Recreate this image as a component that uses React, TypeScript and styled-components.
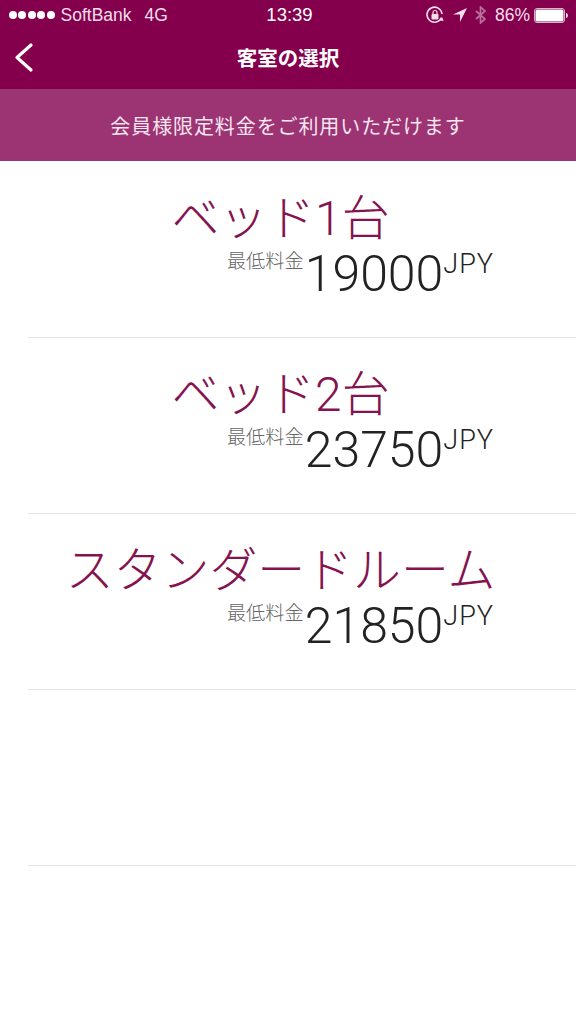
import React from 'react';
import styled, { createGlobalStyle } from 'styled-components';

const GlobalStyle = createGlobalStyle`
  html, body {
    margin: 0;
    padding: 0;
    background: #fff;
    font-family: "Liberation Sans", "Noto Sans CJK JP", sans-serif;
  }
`;

const Page = styled.div`
  width: 576px;
  height: 1024px;
  overflow: hidden;
  background: #fff;
`;

const Header = styled.div`
  background: #84004c;
  color: #fff;
  height: 89px;
`;

const StatusBar = styled.div`
  display: grid;
  grid-template-columns: 1fr auto 1fr;
  align-items: center;
  height: 30px;
  padding: 0 7px 0 9px;
  font-size: 17.5px;
  color: #f3dfe9;
`;

const StatusLeft = styled.div`
  display: flex;
  align-items: center;
`;

const Dots = styled.div`
  display: flex;
  gap: 1.4px;
  margin-right: 6px;
`;

const Dot = styled.span`
  width: 8px;
  height: 8px;
  border-radius: 50%;
  background: #fff;
`;

const Network = styled.span`
  margin-left: 13px;
`;

const Clock = styled.div`
  font-size: 18.5px;
  color: #fff;
  margin-left: 1px;
`;

const StatusRight = styled.div`
  display: flex;
  align-items: center;
  justify-content: flex-end;
`;

const Percent = styled.span`
  margin: 0 4px 0 9px;
`;

const Icon = styled.svg<{ $gap?: number }>`
  display: block;
  margin-left: ${(p) => p.$gap ?? 0}px;
`;

const NavBar = styled.div`
  position: relative;
  display: flex;
  align-items: center;
  justify-content: center;
  height: 54px;
`;

const BackButton = styled.button`
  position: absolute;
  left: 13px;
  top: 12px;
  padding: 0;
  border: none;
  background: none;
`;

const NavTitle = styled.div`
  font-size: 20.5px;
  font-weight: 700;
`;

const Banner = styled.div`
  display: flex;
  align-items: center;
  justify-content: center;
  height: 72px;
  background: #9c3373;
  color: #f7e6ef;
  font-size: 20px;
  letter-spacing: 0.9px;
`;

const RoomList = styled.div`
  padding-top: 1px;
`;

const Row = styled.div`
  box-sizing: border-box;
  height: 176px;
  margin-left: 28px;
  border-bottom: 1px solid #e4e4e4;
`;

const RoomName = styled.div`
  height: 60px;
  padding-top: 27px;
  padding-right: 43px;
  text-align: center;
  font-family: "Roboto", "Noto Sans CJK JP", sans-serif;
  font-size: 47.9px;
  line-height: 60px;
  font-weight: 300;
  color: #84134f;
  white-space: nowrap;
`;

const PriceLine = styled.div`
  display: flex;
  justify-content: flex-end;
  align-items: flex-start;
  padding-right: 82px;
  margin-top: -2px;
  color: #222;
  font-family: "Roboto", "Liberation Sans", sans-serif;
  font-weight: 300;
`;

const PriceLabel = styled.span`
  font-family: "Noto Sans CJK JP", sans-serif;
  font-weight: 300;
  font-size: 19.2px;
  line-height: 24px;
  margin-top: 1px;
  margin-right: 1px;
  color: #666;
`;

const Amount = styled.span`
  font-size: 50px;
  line-height: 52px;
  margin-top: 1px;
`;

const Currency = styled.span`
  font-size: 27px;
  line-height: 30px;
  letter-spacing: 1px;
  margin-top: 2px;
`;

const rooms = [
  { name: 'ベッド1台', price: '19000' },
  { name: 'ベッド2台', price: '23750' },
  { name: 'スタンダードルーム', price: '21850' },
];

export default function App() {
  return (
    <Page>
      <GlobalStyle />
      <Header>
        <StatusBar>
          <StatusLeft>
            <Dots>
              {[0, 1, 2, 3, 4].map((i) => (
                <Dot key={i} />
              ))}
            </Dots>
            SoftBank
            <Network>4G</Network>
          </StatusLeft>
          <Clock>13:39</Clock>
          <StatusRight>
            <Icon width="18" height="18" viewBox="0 0 18 18" fill="none">
              <path d="M15.5 11.5A7.5 7.5 0 1 1 16 8" stroke="#f3dfe9" strokeWidth="1.6" />
              <path d="M13.5 14.5l3-3 1 3.5z" fill="#f3dfe9" />
              <rect x="5.5" y="8" width="7" height="5.5" rx="1" fill="#f3dfe9" />
              <path d="M7 8V6.5a2 2 0 0 1 4 0V8" stroke="#f3dfe9" strokeWidth="1.2" />
            </Icon>
            <Icon $gap={9} width="14" height="14" viewBox="0 0 14 14">
              <path d="M14 0L0 6.5h7V14z" fill="#f3dfe9" />
            </Icon>
            <Icon $gap={8} width="11" height="18" viewBox="0 0 11 18" fill="none">
              <path d="M1 5l9 8-4.5 4V1L10 5l-9 8" stroke="#b9709c" strokeWidth="1.7" />
            </Icon>
            <Percent>86%</Percent>
            <Icon width="35" height="15" viewBox="0 0 35 15">
              <rect x="0.5" y="0.5" width="30" height="14" rx="2.5" fill="none" stroke="#d9b3c9" />
              <rect x="1.5" y="1.5" width="28" height="12" rx="1.5" fill="#fff" />
              <path d="M32 5c2.5 0 2.5 5 0 5z" fill="#f3dfe9" />
            </Icon>
          </StatusRight>
        </StatusBar>
        <NavBar>
          <BackButton aria-label="back">
            <Icon width="22" height="32" viewBox="0 0 22 32" fill="none">
              <path d="M18 3L4 15.5 18 28" stroke="#fff" strokeWidth="3.2" strokeLinecap="round" strokeLinejoin="round" />
            </Icon>
          </BackButton>
          <NavTitle>客室の選択</NavTitle>
        </NavBar>
      </Header>
      <Banner>会員様限定料金をご利用いただけます</Banner>
      <RoomList>
        {rooms.map((room) => (
          <Row key={room.name}>
            <RoomName>{room.name}</RoomName>
            <PriceLine>
              <PriceLabel>最低料金</PriceLabel>
              <Amount>{room.price}</Amount>
              <Currency>JPY</Currency>
            </PriceLine>
          </Row>
        ))}
        <Row />
      </RoomList>
    </Page>
  );
}
